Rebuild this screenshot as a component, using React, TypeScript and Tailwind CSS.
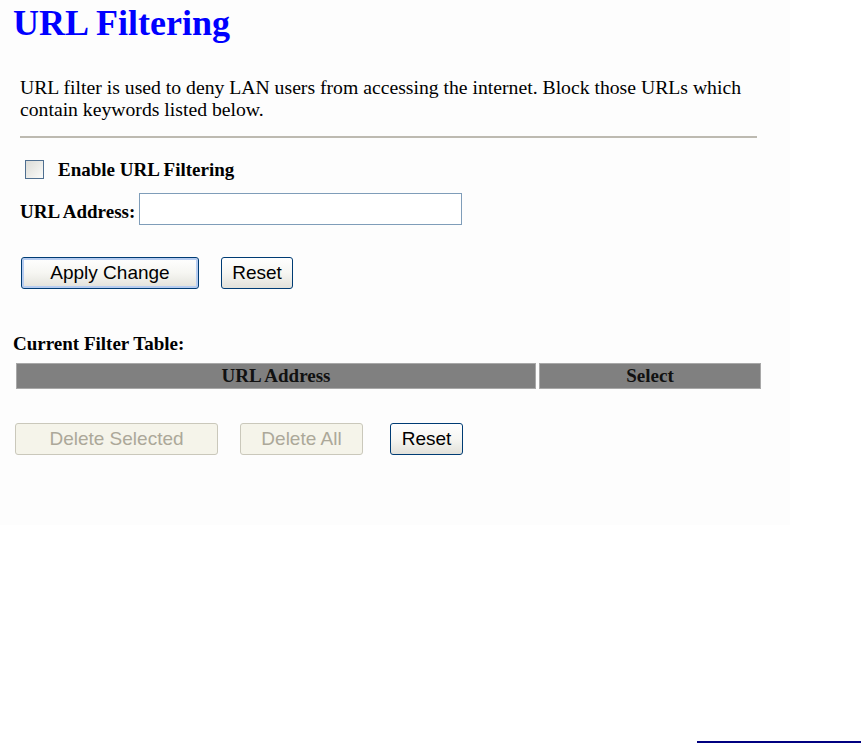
import React, { useState } from "react";

const serif = "font-['Liberation_Serif','Times_New_Roman',serif]";
const sans = "font-['Liberation_Sans',Arial,sans-serif]";

function XpButton({
  label,
  width,
  disabled = false,
  focused = false,
}: {
  label: string;
  width: string;
  disabled?: boolean;
  focused?: boolean;
}) {
  return (
    <button
      type="button"
      disabled={disabled}
      className={`${sans} ${width} h-[32px] rounded-[3px] border text-[19px] leading-[22px] ${
        disabled
          ? "border-[#cac8bb] bg-[#f5f4ea] text-[#aca899]"
          : "border-[#003c74] bg-linear-to-b from-white via-[#f6f6f2] to-[#e2e1da] text-black"
      } ${focused ? "shadow-[inset_0_0_0_2px_#b6ccf0]" : ""}`}
    >
      {label}
    </button>
  );
}

export default function App() {
  const [enabled, setEnabled] = useState(false);
  const [url, setUrl] = useState("");

  return (
    <div className={`${serif} w-[861px] h-[744px] bg-white text-black overflow-hidden`}>
      <div className="w-[790px] h-[525px] bg-[#fdfdfd]">
        {/* Title */}
        <h1 className="pl-[13px] pt-[5px] text-[36px] leading-[36px] font-bold text-[#0000ff]">
          URL Filtering
        </h1>

        {/* Description */}
        <p className="ml-[20px] mt-[35px] w-[745px] text-[19.7px] leading-[22px]">
          URL filter is used to deny LAN users from accessing the internet. Block those URLs which
          contain keywords listed below.
        </p>

        <div className="ml-[20px] mt-[16px] w-[737px] h-[2px] bg-[#bdbab1]" />

        {/* Enable checkbox */}
        <label className="ml-[25px] mt-[22px] flex items-center h-[19px] cursor-pointer">
          <span
            onClick={() => setEnabled(!enabled)}
            className="w-[19px] h-[19px] border border-[#4f6f90] bg-linear-to-br from-[#dcdcd7] to-[#fbfbf9] flex items-center justify-center text-[13px] leading-none text-[#21a121]"
          >
            {enabled ? "✓" : ""}
          </span>
          <span className="ml-[14px] text-[19px] leading-[19px] font-bold">Enable URL Filtering</span>
        </label>

        {/* URL address */}
        <div className="ml-[20px] mt-[14px] flex items-start h-[32px]">
          <span className="mt-[8px] text-[19px] leading-[22px] font-bold">URL Address:</span>
          <input
            value={url}
            onChange={(e) => setUrl(e.target.value)}
            className="ml-[4px] w-[323px] h-[32px] border border-[#7f9db9] bg-white outline-none px-1"
          />
        </div>

        {/* Apply / reset */}
        <div className="ml-[21px] mt-[32px] flex gap-[22px]">
          <XpButton label="Apply Change" width="w-[178px]" focused />
          <XpButton label="Reset" width="w-[72px]" />
        </div>

        {/* Current filter table */}
        <div className="ml-[13px] mt-[44px] text-[19px] leading-[22px] font-bold">Current Filter Table:</div>
        <div className="ml-[16px] mt-[8px] flex gap-[3px] w-[745px]">
          <div className="w-[520px] h-[26px] bg-[#808080] border border-[#a8a8a8] text-center text-[19px] leading-[24px] font-bold text-[#111]">
            URL Address
          </div>
          <div className="w-[222px] h-[26px] bg-[#808080] border border-[#a8a8a8] text-center text-[19px] leading-[24px] font-bold text-[#111]">
            Select
          </div>
        </div>

        <div className="ml-[15px] mt-[34px] flex">
          <XpButton label="Delete Selected" width="w-[203px]" disabled />
          <div className="ml-[22px]">
            <XpButton label="Delete All" width="w-[123px]" disabled />
          </div>
          <div className="ml-[27px]">
            <XpButton label="Reset" width="w-[73px]" />
          </div>
        </div>
      </div>

      {/* footer link underline */}
      <div className="ml-[697px] mt-[216px] w-[164px] h-[2px] bg-[#000080]" />
    </div>
  );
}
